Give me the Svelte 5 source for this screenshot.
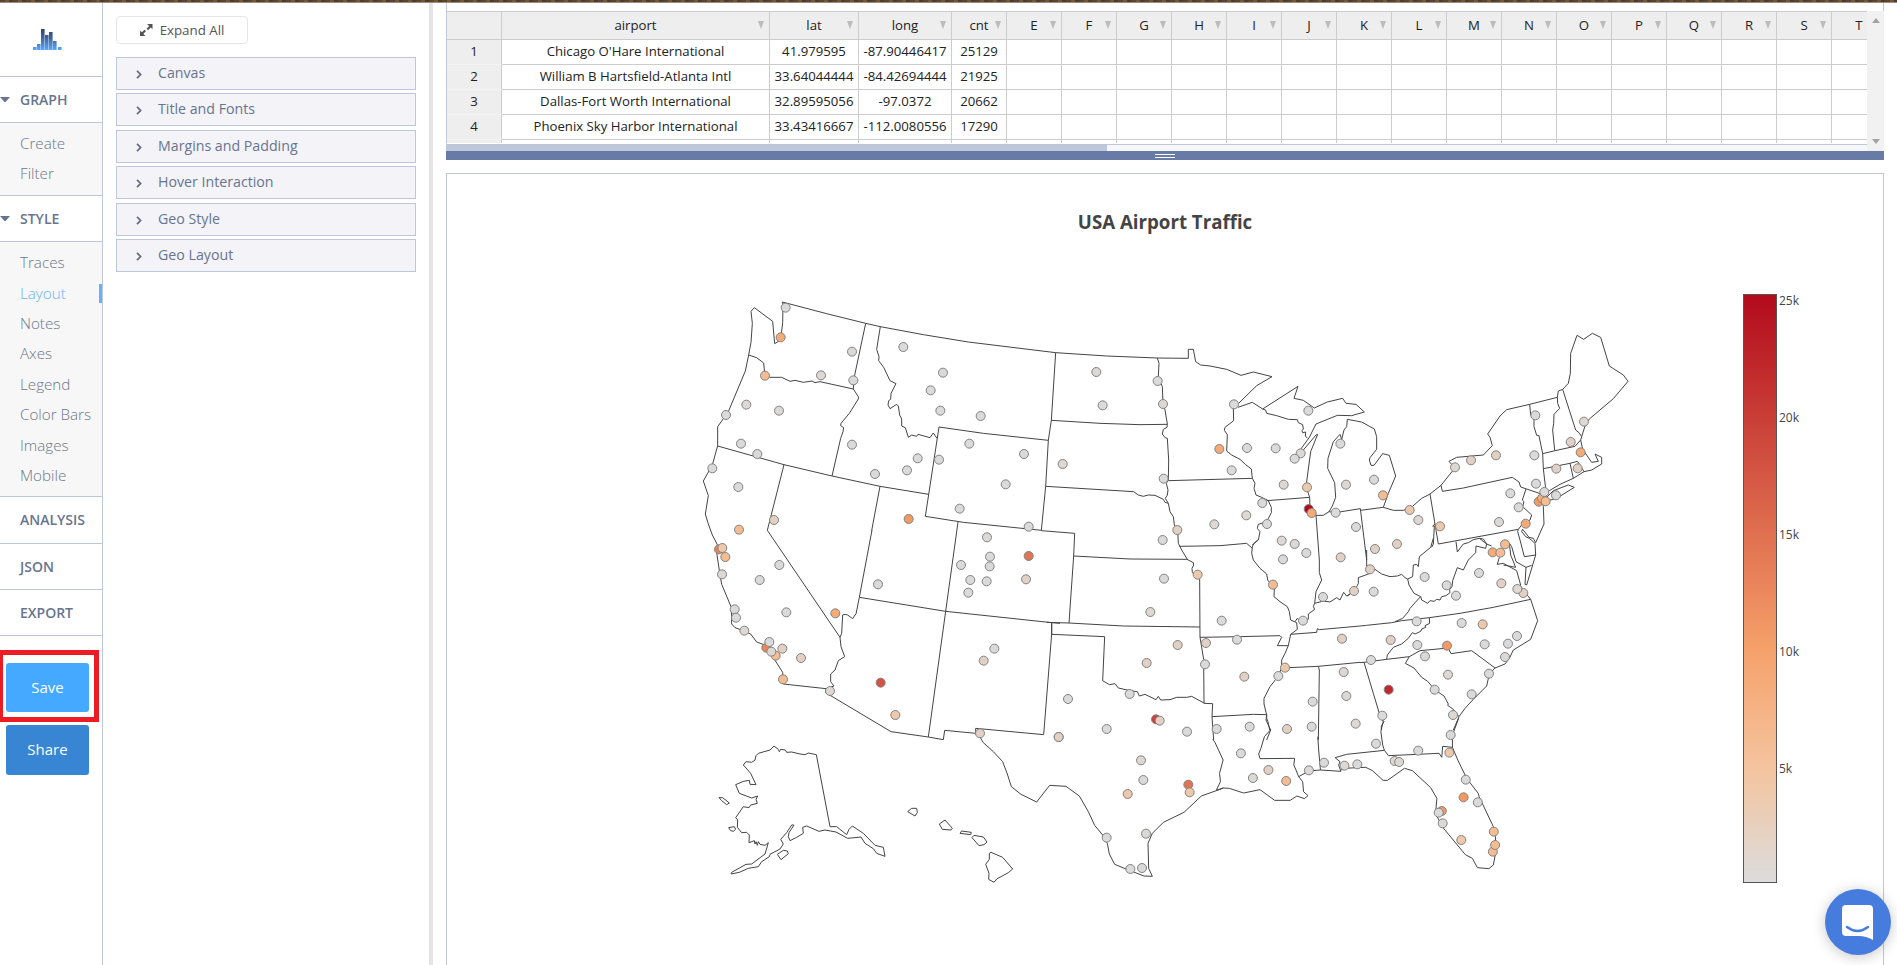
<script>
  const menu = [
    { title: 'GRAPH', open: true, h: 46, items: [['Create', 30], ['Filter', 30]], pad: 6, body: 73 },
    { title: 'STYLE', open: true, h: 46, items: ['Traces', 'Layout', 'Notes', 'Axes', 'Legend', 'Color Bars', 'Images', 'Mobile'].map((t) => [t, 30.4]), pad: 6, body: 255 },
    { title: 'ANALYSIS', h: 47 },
    { title: 'JSON', h: 46 },
    { title: 'EXPORT', h: 46 }
  ];
  const panels = ['Canvas', 'Title and Fonts', 'Margins and Padding', 'Hover Interaction', 'Geo Style', 'Geo Layout'];
  const heads = ['airport', 'lat', 'long', 'cnt', ...'EFGHIJKLMNOPQRST'];
  const rows = [
    ["Chicago O'Hare International", '41.979595', '-87.90446417', '25129'],
    ['William B Hartsfield-Atlanta Intl', '33.64044444', '-84.42694444', '21925'],
    ['Dallas-Fort Worth International', '32.89595056', '-97.0372', '20662'],
    ['Phoenix Sky Harbor International', '33.43416667', '-112.0080556', '17290'],
    ['', '', '', '']
  ];
  const ticks = [['25k', 300], ['20k', 417], ['15k', 534], ['10k', 651], ['5k', 768]];
  const shades = { g: '#dadada', h: '#ddd8d4', i: '#e3d0c4', j: '#edc8ab', k: '#f4bc90', l: '#f5ab77', m: '#f29a63', n: '#e9855b', o: '#e27450', p: '#d65244', q: '#cf3d3d', r: '#c1272d', s: '#b20a1c' };

  // Each tile holds an origin, a horizontal and vertical divisor, outlines and markers [x, y, shade].
  const tiles = [
    { x: 690, y: 290, sx: 3, sy: 3,
      d: `M277,36 279,42 278,98 272,150 254,161 248,94 193,53 183,64 187,100 183,157 176,195 166,243 115,365 83,410 83,467 67,525 40,573 55,617 46,672
      M176,195 200,203 221,219 224,250 240,262 275,262 300,274 315,271 340,277 366,273 375,278 390,275 490,297
      M277,36 410,71 527,100 571,110 700,134 835,156 1097,188
      M527,100 492,265 490,297 505,320 505,327 478,370 453,400 452,407 461,413 459,425 452,445 426,558
      M83,468 282,524 426,558 570,589 716,613
      M282,524 232,721 M570,589 545,722
      M571,110 560,178 567,200 566,212 581,232 600,272 618,281 603,310 602,328 596,332 594,345 600,356 620,343 625,348 629,375 635,387 635,408 646,413 655,442 665,435 680,439 684,433 720,443 730,429 741,445
      M747,411 880,430 1075,451 M747,411 706,679
      M1097,188 1084,391 1075,451 1067,589 1054,721`,
      p: [[287,53,'g'],[272,142,'l'],[486,185,'h'],[393,256,'h'],[490,271,'g'],[225,257,'k'],[169,344,'h'],[267,362,'h'],[108,375,'g'],[153,461,'g'],[202,492,'g'],[67,535,'g'],[145,591,'g'],[640,171,'g'],[759,248,'g'],[722,301,'g'],[751,362,'g'],[872,378,'g'],[838,461,'g'],[1002,492,'g'],[947,583,'g'],[809,656,'g'],[1016,710,'g'],[486,464,'g'],[683,505,'g'],[747,509,'g'],[651,541,'g'],[555,552,'g'],[656,687,'m'],[252,690,'i']] },
    { x: 690, y: 500, sx: 3, sy: 3,
      d: `M46,42 55,72 67,105 84,138 80,158 90,225 95,253 124,322 125,372 135,383 163,393 182,402 200,426 225,435 245,465 278,517 280,552 408,566 407,578 603,695 715,711 760,719 764,691 857,700
      M232,91 450,412 453,440 464,470 445,482 435,510 422,522 422,545 432,558 408,566
      M450,412 455,400 458,345 465,343 473,345 488,356 495,345 498,342 508,292 546,90
      M508,292 767,334 1085,368 1110,370 M804,66 767,334 715,711 M706,49 820,67 1055,91 
      M1085,368 1085,402 1061,704 857,685 857,700`,
      p: [[147,89,'k'],[87,148,'n'],[97,144,'j'],[106,171,'k'],[96,223,'h'],[268,195,'g'],[209,240,'g'],[134,328,'g'],[138,353,'g'],[289,337,'g'],[163,392,'h'],[229,443,'n'],[238,426,'g'],[257,467,'k'],[244,455,'h'],[277,446,'i'],[333,474,'i'],[279,538,'k'],[436,340,'l'],[420,573,'h'],[572,548,'p'],[616,645,'j'],[564,253,'g'],[891,112,'h'],[900,170,'g'],[899,199,'h'],[813,195,'g'],[841,240,'g'],[890,244,'g'],[835,278,'g'],[1016,168,'o'],[1008,238,'i'],[913,446,'g'],[881,482,'i'],[870,700,'i']] },
    { x: 1040, y: 330, sx: 3, sy: 3,
      d: `M47,68 200,78 352,84 445,85 445,58 460,58 467,95 482,105 510,108 560,118 603,136 640,126 696,140 650,167 594,222 580,235 581,272 555,292 553,301 562,314 560,363 575,375 600,388 617,404 634,417 637,445
      M594,232 637,217 668,237 774,169 762,205 790,211 823,234 862,216 908,205 918,220 948,223 973,246 935,257 892,256 828,282 808,322 782,358 782,370 790,360 828,315 833,313 812,365 798,470 809,502 810,540 828,556 850,556 867,545 877,528 887,502 884,458 863,415 864,385 880,335 900,313 905,328 912,300 920,290 922,268 965,276 
      M668,237 677,240 680,250 710,257 745,268 772,269 775,278 788,284 790,297 786,302 788,308 797,306 796,318 803,325
      M34,271 180,280 300,284 381,283 M17,469 281,485 295,495 310,499 325,495 345,496 370,508 375,517 385,520
      M4,602 104,610 101,678 270,687 442,688
      M352,84 357,100 355,140 367,170 369,220 375,240 382,282 381,292 370,298 367,312 375,323 382,325 386,390 385,450 379,460 384,480 382,495 376,505 385,520 390,545 400,560 403,585 413,600 415,640 425,660 442,688
      M385,452 637,445 645,460 642,475 648,495 665,502 685,512 694,532 694,548 680,575 655,583 652,595 660,605 655,630 637,645
      M680,512 809,502 M418,649 540,647 620,640 637,655
      M828,556 838,690 M867,545 885,548 961,536 980,690`,
      p: [[169,126,'h'],[353,153,'g'],[369,222,'h'],[188,226,'g'],[68,402,'h'],[371,446,'g'],[582,223,'g'],[538,357,'l'],[621,354,'g'],[707,355,'g'],[575,421,'g'],[805,242,'g'],[782,370,'h'],[764,386,'g'],[731,464,'h'],[801,472,'j'],[901,341,'g'],[918,464,'h'],[667,519,'g'],[619,556,'h'],[523,583,'h'],[681,582,'g'],[806,537,'s'],[815,549,'l'],[887,548,'g'],[948,591,'g'],[412,600,'i'],[368,630,'g'],[725,632,'h'],[764,642,'h'],[799,669,'g'],[902,682,'i']] },
    { x: 1340, y: 320, sx: 3, sy: 3,
      d: `M65,306 103,327 110,350 110,388 90,413 88,420 93,436 102,436 128,401 148,406 167,468 145,520 130,562 160,571 190,571 213,563 245,535 270,522 303,496 340,450 335,433 327,424 350,412 430,405 457,377 450,352 443,342 480,288 500,269 569,253 652,232
      M61,571 130,562 M270,522 295,672 M303,496 307,514 370,504 517,472 537,486 542,501 560,507 604,522 615,527
      M558,507 547,540 552,545 548,560 575,585 570,600 545,615 535,628 M295,672 535,628
      M569,253 572,285 582,300 582,320 590,346 597,347 608,401 610,446 618,515
      M608,401 645,392 705,379 722,360
      M652,232 653,250 659,265 642,283 641,310 638,330 644,391
      M652,232 655,213 668,208 685,190 691,160 692,100 711,46 731,58 757,40 782,52 808,138 850,165 864,184 820,236 748,297 735,318 725,350 722,360 728,388 755,427 775,424 765,402 785,412 785,432 755,450 732,455 700,475 660,493 628,512 615,527
      M668,208 707,330 717,338 725,350 M610,446 690,430 712,424 718,432 732,455 M690,430 700,475
      M612,540 640,512 685,495 703,502 650,535 612,545 M604,522 610,560 612,612 587,668 580,655 567,652 548,628 545,635 557,650 568,655 585,670 587,705
      M535,628 533,635 540,660 553,710 587,705 M285,612 278,618 283,618 280,672 275,682`,
      p: [[102,479,'g'],[129,526,'k'],[209,570,'j'],[235,600,'h'],[171,672,'i'],[105,687,'i'],[300,619,'j'],[345,442,'h'],[393,421,'i'],[468,406,'i'],[583,406,'g'],[586,286,'g'],[732,305,'h'],[692,366,'i'],[722,397,'l'],[713,445,'i'],[649,446,'i'],[588,491,'g'],[511,520,'g'],[536,562,'g'],[477,606,'h'],[557,611,'l'],[596,545,'m'],[606,535,'l'],[613,516,'g'],[617,544,'k'],[648,526,'g']] },
    { x: 1040, y: 540, sx: 3, sy: 3,
      d: `M101,48 87,249 M441,58 460,68 461,75 456,85 457,97 468,110 479,118 480,292
      M20,247 87,249 250,258 480,261 M35,250 35,283 
      M35,283 194,290 188,422 208,434 225,431 235,444 270,452 292,455 298,468 315,463 348,479 355,469 362,480 390,479 410,472 440,472 455,469 492,489
      M480,292 491,358 492,490 518,491 516,530 521,600 M480,292 600,290 720,287 725,292 712,317 745,317 M516,530 640,523 678,524
      M653,0 640,12 637,22 635,40 640,60 660,85 680,102 683,120 703,145 702,170 720,185 742,200 748,215 752,240 770,248 772,268 752,283 745,317 735,340 725,360 725,385 712,412 690,440 672,475 672,492 680,525 678,540 692,570 680,600
      M838,60 838,98 845,120 828,155 824,190 820,200 824,208 805,222 805,238 785,250 772,235 765,245
      M824,190 850,183 870,186 890,173 900,180 911,157 920,168 930,163 940,150
      M752,283 830,277 832,266 838,269 960,258 M745,383 835,379 960,367 M835,379 838,390 835,600`,
      p: [[372,116,'g'],[331,216,'h'],[473,104,'j'],[545,242,'g'],[498,309,'i'],[591,299,'g'],[413,315,'i'],[320,369,'i'],[495,373,'g'],[613,410,'i'],[269,462,'g'],[84,477,'g'],[200,567,'g'],[441,575,'g'],[348,538,'q'],[359,542,'i'],[56,591,'i'],[530,567,'g'],[629,560,'g'],[699,134,'k'],[729,58,'g'],[789,242,'g'],[849,171,'g'],[735,383,'j'],[715,408,'g'],[906,296,'i'],[911,396,'h'],[818,485,'g'],[919,468,'h'],[741,567,'i'],[815,560,'g'],[947,551,'h']] },
    { x: 1340, y: 530, sx: 3, sy: 3,
      d: `M60,288 80,286 155,278 185,272 268,263 360,250 460,232 572,208 M60,398 72,397 140,388 208,380 M72,397 100,490 117,547 125,565 132,575 124,588 124,600
      M268,263 269,280 255,287 257,292 245,297 242,304 225,312 217,308 205,325 185,342 160,352 142,375 140,388
      M208,380 240,362 325,354 333,371 395,362 465,414 M208,380 196,400 222,414 245,442 263,454 285,480 312,498 325,522 323,526 340,538 357,560
      M540,165 551,182 572,208 593,272 572,328 520,360 508,385 495,402 465,414 448,432 440,468 400,508 375,535 357,560 340,600
      M22,198 40,183 50,170 55,160 55,143 90,130 105,118 125,132 150,140 172,138 185,133 195,143 203,147 218,140 220,105 230,103 235,110 238,80 272,52 280,25 
      M80,60 80,112 M203,147 207,165 222,190 242,200 235,207 210,235 205,245 188,265 165,275
      M242,200 245,210 263,220 270,212 282,214 290,208 300,210 305,200 318,197 330,188 329,178 336,170 338,152 352,113 370,120 385,90 407,68 408,48 437,55 440,42 418,25 400,29 385,38 370,42 352,66 348,35
      M418,25 430,27 440,42 455,48 M478,82 472,103 490,100 530,122 542,165
      M508,40 512,75 527,112 490,105 M510,42 515,50 528,95 558,112 575,106 M558,112 555,163 560,165 587,75`,
      p: [[90,118,'i'],[101,185,'g'],[42,183,'i'],[254,141,'g'],[320,166,'g'],[348,197,'g'],[417,129,'g'],[484,160,'i'],[550,189,'i'],[532,177,'h'],[458,67,'l'],[481,68,'k'],[495,43,'k'],[230,274,'g'],[152,330,'i'],[232,345,'g'],[255,379,'h'],[321,347,'m'],[365,279,'g'],[428,283,'j'],[434,343,'g'],[504,341,'g'],[531,318,'g'],[495,381,'h'],[447,431,'g'],[324,434,'h'],[395,493,'g'],[284,479,'g'],[339,555,'h'],[146,479,'r'],[127,557,'g'],[93,390,'g']] },
    { x: 700, y: 720, sx: 3, sy: 3,
      d: `M349,104 390,320 410,320 440,344 447,328 457,318 490,340 525,376 550,382 555,409 530,400 520,386 495,370 483,351 443,355 408,336 375,330 357,334 320,318 308,322 310,340 290,352 270,362 265,350 267,338 282,315 275,315 260,338 242,358 250,372 240,387 210,403 208,410 185,425 175,440 145,445 118,457 93,462 95,457 138,433 155,432 195,402 205,368 195,376 180,373 175,365 172,376 168,365 165,372 163,362 147,368 148,345 140,337 125,338 112,322 113,300 107,293 130,260 147,263 152,255 172,250 168,238 173,228 155,234 118,220 107,194 130,184 148,181 150,193 168,194 152,160 130,135 138,125 155,127 165,120 168,107 175,100 210,90 222,78 235,88 238,95 242,88 256,90 260,97 275,96 300,102 315,104 325,99Z
      M57,233 68,233 88,249 80,254 65,242Z M86,323 103,320 107,328 100,334 92,332Z M232,403 250,391 262,393 265,401 243,419Z
      M623,275 635,265 650,265 652,278 645,288Z M718,312 735,300 757,325 753,330 727,328Z M780,340 785,333 814,337 812,344Z M816,353 822,346 850,351 861,366 852,374 837,377Z M868,400 873,397 908,412 938,447 925,458 890,477 882,487 866,478 867,460 857,433 868,418Z
      M838,48 850,68 880,95 908,125 922,162 934,200 963,223 1010,246 1049,196 1098,199 1138,228 1165,275 1184,316 1208,345 1222,370 1228,402 1244,433 1290,452 1332,468 1357,469 1346,445 1344,370 1357,340 1390,307 1452,277 1504,228 1560,208 1570,204`,
      p: [[1076,51,'i'],[1323,121,'h'],[1330,180,'g'],[1283,222,'j'],[1465,194,'o'],[1469,217,'j'],[1220,353,'g'],[1338,341,'h'],[1291,447,'g'],[1326,444,'g']] },
    { x: 1200, y: 710, sx: 2.25, sy: 3,
      d: `M52,234 66,235 98,249 135,239 168,271 203,271 218,258 235,266 243,257 233,245 231,215 222,200 M52,234 38,240
      M150,13 150,25 153,35 157,62 145,80 137,115 132,132 135,146 213,145 211,165 216,180 222,200
      M29,88 34,98 52,150 44,190 46,215 37,240
      M222,200 245,183 271,180 317,184 312,165 315,155 304,143 330,133 415,121 424,137 538,130 544,142 546,109 568,112
      M317,180 325,175 353,173 373,172 388,182 412,211 422,211 460,175 478,182 519,233 533,265 530,310 545,350 597,434 613,445 624,473 650,476 660,465 665,430 665,380 660,350 628,260 626,250 600,205 580,150 568,112 568,75 582,25
      M265,80 267,120 271,180 M402,10 412,35 407,65 411,105 415,121`,
      p: [[92,130,'g'],[119,204,'h'],[154,180,'i'],[194,213,'k'],[245,181,'h'],[279,158,'g'],[325,167,'h'],[354,163,'g'],[396,101,'g'],[438,153,'h'],[448,156,'h'],[491,122,'g'],[564,75,'g'],[561,128,'j'],[598,209,'g'],[593,262,'m'],[625,277,'g'],[544,303,'m'],[537,308,'g'],[546,340,'h'],[588,390,'j'],[661,365,'k'],[659,425,'k'],[664,405,'k']] }
  ];
  const bars = [[0, 18, 3], [4, 15, 6], [8, 0, 21], [12, 6, 15], [16, 3, 18], [20, 12, 9], [25, 18, 3]];
</script>

<div class="app">
  <div class="strip"></div>
  <div class="work">
    <nav>
      <div class="logo">
        <svg width="29" height="21" viewBox="0 0 29 21">
          <defs><linearGradient id="lg" gradientUnits="userSpaceOnUse" x1="0" y1="0" x2="0" y2="21"><stop offset="0" stop-color="#2f4568" /><stop offset=".45" stop-color="#42689f" /><stop offset="1" stop-color="#5ba6ff" /></linearGradient></defs>
          {#each bars as [x, y, h]}<rect {x} {y} width="3.6" height={h} fill="url(#lg)" />{/each}
        </svg>
      </div>
      {#each menu as m}
        <div class="head" style="height:{m.h}px">
          {#if m.open}<svg width="10" height="6" viewBox="0 0 10 6"><path d="M0 0H10L6 4.6Q5 5.6 4 4.6Z" fill="#67758f" /></svg>{/if}
          <span>{m.title}</span>
        </div>
        {#if m.items}
          <div class="sub" style="height:{m.body}px">
            {#each m.items as [t, h]}
              <div class="item" class:active={t === 'Layout'} style="height:{h}px"><span>{t}</span></div>
            {/each}
          </div>
        {/if}
      {/each}
      <div class="saveframe"><button class="save">Save</button></div>
      <button class="share">Share</button>
    </nav>

    <aside>
      <button class="expand">
        <svg width="13" height="12" viewBox="0 0 13 12"><path d="M7 0H12.5V5.2L10.8 3.6 8 6.2 6.6 4.8 9.2 2.1ZM5.6 12H0V6.6L1.8 8.3 4.6 5.7 6 7.1 3.4 9.9Z" fill="#555" /></svg>
        Expand All
      </button>
      <div class="panels">
        {#each panels as p}
          <div class="panel">
            <svg width="6" height="9" viewBox="0 0 6 9"><path d="M1 .9 4.6 4.5 1 8.1" fill="none" stroke="#5f6b80" stroke-width="1.7" /></svg>
            <span>{p}</span>
          </div>
        {/each}
      </div>
    </aside>
    <div class="divider"></div>

    <main>
      <section class="sheet">
        <div class="gridrow">
          <div class="grid">
            <div class="cell hd no"></div>
            {#each heads as h}<div class="cell hd">{h}<i></i></div>{/each}
            {#each rows as r, n}
              <div class="cell no">{n < 4 ? n + 1 : ''}</div>
              {#each heads as _, c}<div class="cell">{r[c] ?? ''}</div>{/each}
            {/each}
          </div>
          <div class="vscroll">
            <svg width="8" height="5"><path d="M0 5 4 0 8 5Z" fill="#a3a3a3" /></svg>
            <svg width="8" height="5"><path d="M0 0 4 5 8 0Z" fill="#a3a3a3" /></svg>
          </div>
        </div>
        <div class="hscroll"><div class="thumb"></div><div class="track"></div><div class="corner"></div></div>
      </section>
      <div class="splitter"><span></span></div>
      <section class="plot">
        <svg width="1437" height="791" viewBox="447 174 1437 791">
          <defs>
            <linearGradient id="cb" x1="0" y1="1" x2="0" y2="0">
              <stop offset="0" stop-color="#dcdcdc" /><stop offset=".2" stop-color="#f5c39d" /><stop offset=".4" stop-color="#f5a069" /><stop offset="1" stop-color="#b20a1c" />
            </linearGradient>
          </defs>
          <text class="title" x="1165" y="229" text-anchor="middle">USA Airport Traffic</text>
          {#each tiles as t}
            <g transform="translate({t.x} {t.y}) scale({1 / t.sx} {1 / t.sy})"><path class="land" d={t.d} /></g>
          {/each}
          {#each tiles as t}
            {#each t.p as [x, y, c]}
              <circle cx={t.x + x / t.sx} cy={t.y + y / t.sy} r="4.5" fill={shades[c]} stroke="#828282" />
            {/each}
          {/each}
          <rect x="1743.5" y="294.5" width="33" height="588" fill="url(#cb)" stroke="#555" />
          {#each ticks as [t, y]}<text class="tick" x="1779" y={y + 4.5}>{t}</text>{/each}
        </svg>
      </section>
    </main>
  </div>
  <div class="chat">
    <svg width="32" height="35" viewBox="0 0 32 35"><path d="M4 0H27Q31 0 31 4V35Q24 31 17 31H4Q0 31 0 27V4Q0 0 4 0Z" fill="#fff" /><path d="M5 22Q15.500 30 26 22" fill="none" stroke="#457cdd" stroke-width="2.4" stroke-linecap="round" /></svg>
  </div>
</div>

<style>
  :global(body) { margin: 0; background: #fff; overflow: hidden; }
  .app { position: relative; width: 1897px; height: 965px; overflow: hidden; font-family: 'Open Sans', sans-serif; color: #67758f; display: flex; flex-direction: column; }
  .app * { box-sizing: border-box; }
  button { font-family: inherit; padding: 0; border: 0; }
  .strip { height: 3px; flex: none; background: repeating-linear-gradient(90deg, #5d4529 0 5px, #745833 5px 9px, #503b24 9px 13px); border-bottom: 1px solid #948d88; }
  .work { display: flex; flex: 1; }
  nav { width: 103px; border-right: 1px solid #bec7d9; display: flex; flex-direction: column; flex: none; }
  .logo { height: 74px; border-bottom: 1px solid #bec7d9; padding: 26px 0 0 33px; flex: none; }
  .logo svg { display: block; }
  .head { border-bottom: 1px solid #bec7d9; display: flex; align-items: center; font-size: 14px; font-weight: 600; padding: 0 0 1px 20px; flex: none; position: relative; }
  .head svg { position: absolute; left: 0; top: 20px; }
  .sub { background: #f7f7f7; border-bottom: 1px solid #bec7d9; padding-top: 5px; flex: none; }
  .item { font-size: 15.2px; font-weight: 300; padding-left: 20px; display: flex; align-items: center; white-space: nowrap; color: #6c7689; }
  .active { color: #69b3ff; position: relative; }
  .active::after { content: ''; position: absolute; right: 0; top: 7px; width: 3px; height: 19px; background: #69b0fb; }
  .saveframe { margin: 14px 0 0 -2px; width: 101px; height: 72px; border: 5px solid #ed1c24; padding: 8px 0 0 3px; flex: none; }
  .save, .share { display: block; width: 83px; height: 49px; border-radius: 3px; background: #45a9ff; color: #fff; font-size: 15px; font-weight: 500; padding-bottom: 2px; }
  .share { background: #3885d3; height: 50px; margin: 3px 0 0 6px; flex: none; }
  aside { width: 326px; padding: 13px 0 0 13px; flex: none; }
  .expand { display: flex; align-items: center; justify-content: center; gap: 7px; width: 132px; height: 28px; border: 1px solid #e5e5e5; border-radius: 4px; background: #fff; font-size: 13.3px; color: #555; padding-right: 0; }
  .panels { margin-top: 13px; display: flex; flex-direction: column; gap: 3.45px; }
  .panel { width: 300px; height: 33px; border: 1px solid #bec7d9; background: #f3f3f8; display: flex; align-items: center; gap: 16px; padding: 0 0 2px 19px; font-size: 14.2px; }
  .panel svg { position: relative; top: 2px; }
  .divider { width: 4px; background: #e5e5e5; flex: none; }
  main { width: 1438px; margin-left: 13px; display: flex; flex-direction: column; }
  .sheet { border: solid #bec7d9; border-width: 0 1px; height: 148px; padding-top: 8px; }
  .gridrow { display: flex; height: 133px; width: 1437px; }
  .grid { flex: none; width: 1420px; height: 132px; overflow: hidden; border-top: 1px solid #ccc; display: grid; grid-template-columns: 55px 268px 89px 93px 55px repeat(16, 55px); grid-template-rows: 28px; grid-auto-rows: 25px; }
  .cell { border: solid #ccc; border-width: 0 1px 1px 0; display: flex; align-items: center; justify-content: center; font-size: 13.2px; color: #222; position: relative; white-space: nowrap; padding-bottom: 2px; }
  .no { background: #eee; border-bottom-color: #f3f3f3; }
  .hd { background: #eee; border-bottom-color: #ccc; padding-bottom: 1px; }
  .hd i { position: absolute; right: 5px; top: 9px; border: solid transparent; border-width: 8px 3.500px 0; border-top-color: #bbb; }
  .vscroll { width: 17px; background: #f1f1f1; display: flex; flex-direction: column; justify-content: space-between; align-items: center; padding: 7px 0 0; flex: none; }
  .hscroll { display: flex; height: 7px; width: 1437px; }
  .thumb { width: 660px; background: #bec7d9; }
  .track { flex: 1; background: #f7f7f7; border-top: 1px solid #bec7d9; }
  .corner { width: 17px; background: #f1f1f1; }
  .splitter { height: 9px; background: #687ba6; display: flex; align-items: center; justify-content: center; }
  .splitter span { width: 20px; height: 4px; border: solid #fff; border-width: 1px 0; }
  .plot { margin-top: 13px; height: 792px; border: 1px solid #bec7d9; border-bottom: 0; overflow: hidden; }
  .plot svg { display: block; }
  .land { fill: none; stroke: #444; stroke-width: 1; vector-effect: non-scaling-stroke; }
  .title { font-size: 18.7px; font-weight: 700; fill: #444; }
  .tick { font-size: 12px; fill: #444; }
  .chat { position: absolute; left: 1825px; top: 889px; width: 66px; height: 66px; border-radius: 50%; background: #457cdd; box-shadow: 0 2px 14px rgba(0, 0, 0, .22); display: flex; justify-content: center; align-items: center; }
</style>
